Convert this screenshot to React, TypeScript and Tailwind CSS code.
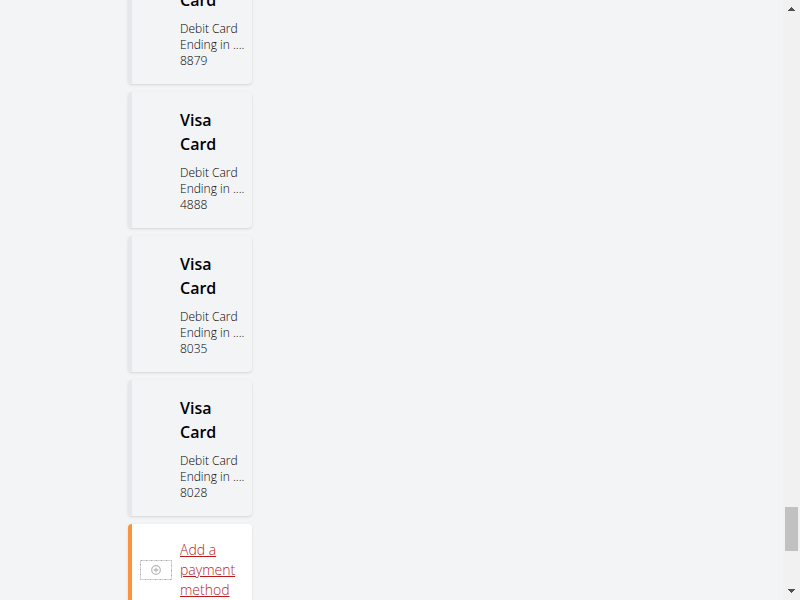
const cards = [
  { id: 1, ending: "8879" },
  { id: 2, ending: "4888" },
  { id: 3, ending: "8035" },
  { id: 4, ending: "8028" },
];

function PaymentCard({ ending }: { ending: string }) {
  return (
    <li className="rounded border-l-4 border-[#e5e7eb] pt-4 pr-2 pb-[15px] pl-12 shadow">
      <h3 className="text-base/6 font-[650]">
        Visa
        <br />
        Card
      </h3>
      <p className="mt-[9px] text-xs/4 font-[350] whitespace-nowrap">
        Debit Card
        <br />
        Ending in ....
        <br />
        {ending}
      </p>
    </li>
  );
}

function AddMethod() {
  return (
    <li className="flex items-center gap-2 rounded border-l-4 border-[#fb923c] bg-white px-2 py-4 shadow">
      <svg className="h-5 w-8 shrink-0" viewBox="0 0 32 20" fill="none" stroke="#b8b8b8" aria-hidden="true">
        <rect x="0.5" y="0.5" width="31" height="19" stroke="#a8a8a8" strokeDasharray="2 1 1 1" />
        <circle cx="16" cy="10" r="4.3" strokeWidth="1.2" />
        <path d="M13.7 10h4.6M16 7.7v4.6" strokeWidth="1.3" />
      </svg>
      <a href="#add" className="text-sm/5 font-[350] text-[#b91c1c] underline">
        Add a
        <br />
        payment
        <br />
        method
      </a>
    </li>
  );
}

function Scrollbar() {
  return (
    <div className="flex w-[17px] shrink-0 flex-col items-center justify-between bg-[#f1f1f1]" aria-hidden="true">
      <svg className="h-[17px] w-[17px]" viewBox="0 0 17 17" fill="#505050" shapeRendering="crispEdges">
        <path d="M8 7h1v1h1v1h1v1h1v1H5v-1h1V9h1V8h1z" />
      </svg>
      <div className="flex w-full grow flex-col px-0.5 pb-8">
        <div className="mt-auto h-11 bg-[#c1c1c1]" />
      </div>
      <svg className="h-[17px] w-[17px]" viewBox="0 0 17 17" fill="#505050" shapeRendering="crispEdges">
        <path d="M5 6h7v1h-1v1h-1v1H9v1H8V9H7V8H6V7H5z" />
      </svg>
    </div>
  );
}

export default function App() {
  return (
    <div className="flex h-screen overflow-hidden bg-[#f3f4f6] font-['Open_Sans','Noto_Sans',sans-serif] text-black">
      <main className="min-w-0 grow overflow-hidden pl-32">
        <ul className="-mt-13 flex w-31 flex-col gap-2">
          {cards.map((card) => (
            <PaymentCard key={card.id} ending={card.ending} />
          ))}
          <AddMethod />
        </ul>
      </main>
      <Scrollbar />
    </div>
  );
}
